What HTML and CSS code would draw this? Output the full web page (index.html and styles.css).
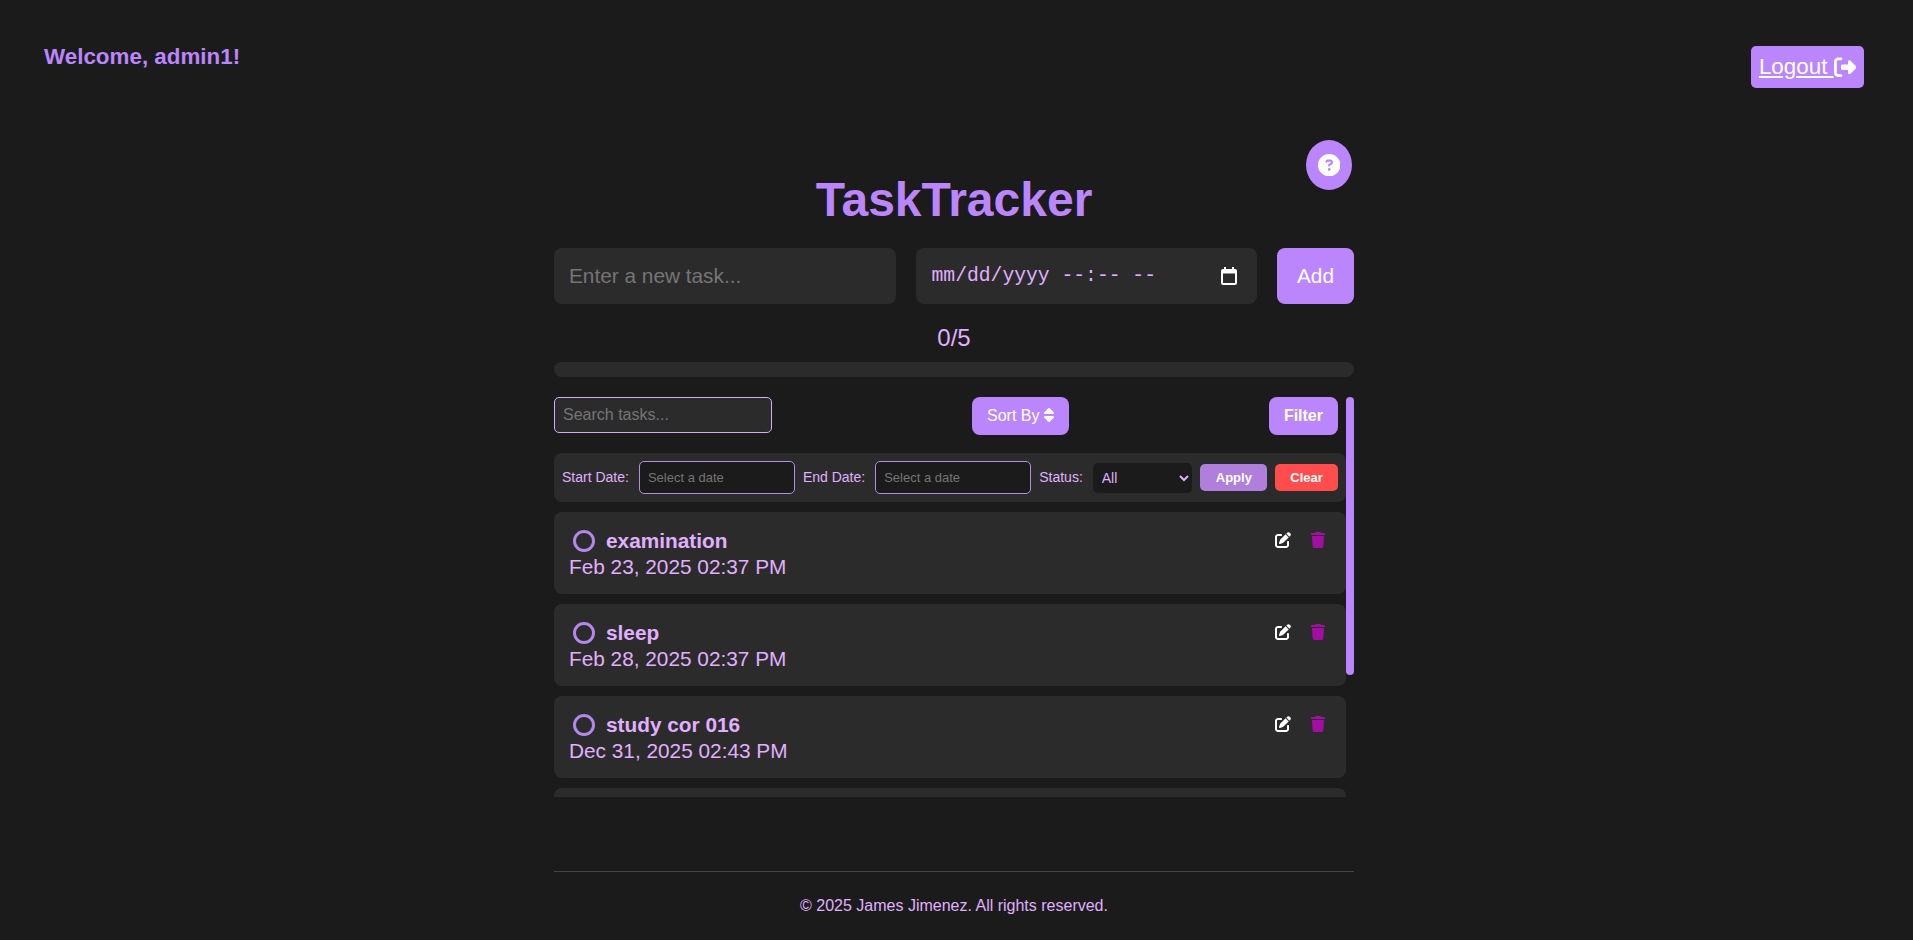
FILE: index.html
```html
<!DOCTYPE html>
<html lang="en">
<head>
<meta charset="utf-8">
<title>TaskTracker</title>
<link rel="stylesheet" href="styles.css">
</head>
<body>
<header class="topbar">
  <h2 class="welcome">Welcome, admin1!</h2>
  <a class="logout" href="#"><span class="logout-text">Logout </span><svg class="logout-icon" viewBox="0 0 512 512"><path d="M377.9 105.9L500.7 228.7c7.2 7.2 11.3 17.1 11.3 27.3s-4.1 20.1-11.3 27.3L377.9 406.1c-6.4 6.4-15 9.9-24 9.9c-18.7 0-33.9-15.2-33.9-33.9l0-62.1-128 0c-17.7 0-32-14.3-32-32l0-64c0-17.7 14.3-32 32-32l128 0 0-62.1c0-18.7 15.2-33.9 33.9-33.9c9 0 17.6 3.5 24 9.9zM160 96L96 96c-17.7 0-32 14.3-32 32l0 256c0 17.7 14.3 32 32 32l64 0c17.7 0 32 14.3 32 32s-14.3 32-32 32l-64 0c-53 0-96-43-96-96L0 128C0 75 43 32 96 32l64 0c17.7 0 32 14.3 32 32s-14.3 32-32 32z"/></svg></a>
</header>
<main class="app">
  <button class="help" type="button" aria-label="Help"><svg class="help-icon" viewBox="0 0 512 512"><path d="M256 512A256 256 0 1 0 256 0a256 256 0 1 0 0 512zM169.8 165.3c7.9-22.3 29.1-37.3 52.8-37.3h58.3c34.9 0 63.1 28.3 63.1 63.1c0 22.6-12.1 43.5-31.7 54.8L280 264.4c-.2 13-10.9 23.6-24 23.6c-13.3 0-24-10.7-24-24V250.5c0-8.6 4.6-16.5 12.1-20.8l44.3-25.4c4.7-2.7 7.6-7.7 7.6-13.1c0-8.4-6.8-15.1-15.1-15.1H222.6c-3.4 0-6.4 2.1-7.5 5.3l-.4 1.2c-4.4 12.5-18.2 19-30.6 14.6s-19-18.2-14.6-30.6l.4-1.2zM224 352a32 32 0 1 1 64 0 32 32 0 1 1 -64 0z"/></svg></button>
  <h1 class="title">TaskTracker</h1>
  <form class="task-form">
    <input class="field task-input" type="text" placeholder="Enter a new task...">
    <div class="field task-date"><span>mm/dd/yyyy --:-- --</span><svg class="calendar" viewBox="0 0 16 18"><path d="M3 0h2v2h6V0h2v2h1a2 2 0 0 1 2 2v12a2 2 0 0 1-2 2H2a2 2 0 0 1-2-2V4a2 2 0 0 1 2-2h1V0zM2 6.5V16h12V6.500H2z"/></svg></div>
    <button class="add" type="button">Add</button>
  </form>
  <div class="counter">0/5</div>
  <div class="progress"></div>
  <div class="list-wrap">
    <div class="scroller">
      <div class="toolbar">
        <input class="search" type="text" placeholder="Search tasks...">
        <button class="tool-btn sort" type="button">Sort By <svg class="sort-icon" viewBox="0 0 320 512"><path d="M137.4 41.4c12.5-12.5 32.8-12.5 45.3 0l128 128c9.2 9.2 11.9 22.9 6.9 34.9s-16.6 19.8-29.6 19.8H32c-12.9 0-24.6-7.8-29.6-19.8s-2.200-25.700 6.900-34.900l128-128zm0 429.3l-128-128c-9.2-9.2-11.9-22.9-6.9-34.9s16.6-19.8 29.6-19.8H288c12.9 0 24.6 7.8 29.6 19.8s2.200 25.700-6.900 34.900l-128 128c-12.5 12.5-32.8 12.5-45.3 0z"/></svg></button>
        <button class="tool-btn filter" type="button">Filter</button>
      </div>
      <div class="filters">
        <label class="filter-label">Start Date:</label>
        <input class="date-filter" type="text" placeholder="Select a date">
        <label class="filter-label">End Date:</label>
        <input class="date-filter" type="text" placeholder="Select a date">
        <label class="filter-label">Status:</label>
        <select class="status"><option>All</option><option>Completed</option><option>Pending</option></select>
        <button class="mini apply" type="button">Apply</button>
        <button class="mini clear" type="button">Clear</button>
      </div>
      <ul class="tasks">
        <li class="task">
          <div class="task-row">
            <span class="check"></span><span class="task-name">examination</span>
            <div class="actions">
              <svg class="edit" viewBox="0 0 512 512"><path d="M471.6 21.7c-21.9-21.9-57.3-21.9-79.2 0L362.3 51.7l97.9 97.9 30.1-30.1c21.9-21.9 21.9-57.3 0-79.2L471.6 21.7zm-299.2 220c-6.1 6.1-10.8 13.6-13.5 21.9l-29.6 88.8c-2.9 8.6-.6 18.1 5.8 24.6s15.9 8.7 24.6 5.8l88.8-29.6c8.2-2.7 15.7-7.4 21.9-13.5L437.7 172.3 339.7 74.3 172.4 241.7zM96 64C43 64 0 107 0 160V416c0 53 43 96 96 96H352c53 0 96-43 96-96V320c0-17.7-14.3-32-32-32s-32 14.3-32 32v96c0 17.7-14.3 32-32 32H96c-17.7 0-32-14.3-32-32V160c0-17.7 14.3-32 32-32h96c17.7 0 32-14.3 32-32s-14.3-32-32-32H96z"/></svg>
              <svg class="trash" viewBox="0 0 448 512"><path d="M135.2 17.7L128 32H32C14.3 32 0 46.3 0 64S14.3 96 32 96H416c17.7 0 32-14.3 32-32s-14.3-32-32-32H320l-7.2-14.3C307.4 6.8 296.3 0 284.2 0H163.8c-12.1 0-23.2 6.8-28.6 17.7zM416 128H32L53.2 467c1.6 25.3 22.6 45 47.9 45H346.9c25.3 0 46.3-19.7 47.9-45L416 128z"/></svg>
            </div>
          </div>
          <div class="task-date-text">Feb 23, 2025 02:37 PM</div>
        </li>
        <li class="task">
          <div class="task-row">
            <span class="check"></span><span class="task-name">sleep</span>
            <div class="actions">
              <svg class="edit" viewBox="0 0 512 512"><path d="M471.6 21.7c-21.9-21.9-57.3-21.9-79.2 0L362.3 51.7l97.9 97.9 30.1-30.1c21.9-21.9 21.9-57.3 0-79.2L471.6 21.7zm-299.2 220c-6.1 6.1-10.8 13.6-13.5 21.9l-29.6 88.8c-2.9 8.6-.6 18.1 5.8 24.6s15.9 8.7 24.6 5.8l88.8-29.6c8.2-2.7 15.7-7.4 21.9-13.5L437.7 172.3 339.7 74.3 172.4 241.7zM96 64C43 64 0 107 0 160V416c0 53 43 96 96 96H352c53 0 96-43 96-96V320c0-17.7-14.3-32-32-32s-32 14.3-32 32v96c0 17.7-14.3 32-32 32H96c-17.7 0-32-14.3-32-32V160c0-17.7 14.3-32 32-32h96c17.7 0 32-14.3 32-32s-14.3-32-32-32H96z"/></svg>
              <svg class="trash" viewBox="0 0 448 512"><path d="M135.2 17.7L128 32H32C14.3 32 0 46.3 0 64S14.3 96 32 96H416c17.7 0 32-14.3 32-32s-14.3-32-32-32H320l-7.2-14.3C307.4 6.8 296.3 0 284.2 0H163.8c-12.1 0-23.2 6.8-28.6 17.7zM416 128H32L53.2 467c1.6 25.3 22.6 45 47.9 45H346.9c25.3 0 46.3-19.7 47.9-45L416 128z"/></svg>
            </div>
          </div>
          <div class="task-date-text">Feb 28, 2025 02:37 PM</div>
        </li>
        <li class="task">
          <div class="task-row">
            <span class="check"></span><span class="task-name">study cor 016</span>
            <div class="actions">
              <svg class="edit" viewBox="0 0 512 512"><path d="M471.6 21.7c-21.9-21.9-57.3-21.9-79.2 0L362.3 51.7l97.9 97.9 30.1-30.1c21.9-21.9 21.9-57.3 0-79.2L471.6 21.7zm-299.2 220c-6.1 6.1-10.8 13.6-13.5 21.9l-29.6 88.8c-2.9 8.6-.6 18.1 5.8 24.6s15.9 8.7 24.6 5.8l88.8-29.6c8.2-2.7 15.7-7.4 21.9-13.5L437.7 172.3 339.7 74.3 172.4 241.7zM96 64C43 64 0 107 0 160V416c0 53 43 96 96 96H352c53 0 96-43 96-96V320c0-17.7-14.3-32-32-32s-32 14.3-32 32v96c0 17.7-14.3 32-32 32H96c-17.7 0-32-14.3-32-32V160c0-17.7 14.3-32 32-32h96c17.7 0 32-14.3 32-32s-14.3-32-32-32H96z"/></svg>
              <svg class="trash" viewBox="0 0 448 512"><path d="M135.2 17.7L128 32H32C14.3 32 0 46.3 0 64S14.3 96 32 96H416c17.7 0 32-14.3 32-32s-14.3-32-32-32H320l-7.2-14.3C307.4 6.8 296.3 0 284.2 0H163.8c-12.1 0-23.2 6.8-28.6 17.7zM416 128H32L53.2 467c1.6 25.3 22.6 45 47.9 45H346.9c25.3 0 46.3-19.7 47.9-45L416 128z"/></svg>
            </div>
          </div>
          <div class="task-date-text">Dec 31, 2025 02:43 PM</div>
        </li>
        <li class="task"></li>
      </ul>
    </div>
    <div class="thumb"></div>
  </div>
  <footer class="footer">© 2025 James Jimenez. All rights reserved.</footer>
</main>
</body>
</html>
```

FILE: styles.css
```css
* { box-sizing: border-box; }
html, body { height: 100%; }
body {
  margin: 0;
  padding-right: 5px;
  overflow: hidden;
  background: #1b1b1b;
  color: #e0b0ff;
  font-family: "Liberation Sans", Arial, sans-serif;
}
.topbar {
  display: flex;
  justify-content: space-between;
  align-items: flex-start;
  padding: 44px 44px 0;
  height: 88px;
}
.welcome {
  margin: 0;
  font-size: 22.4px;
  font-weight: 700;
  color: #bb86fc;
}
.logout {
  display: flex;
  align-items: center;
  margin-top: 2px;
  padding: 8px;
  height: 42px;
  border-radius: 5px;
  background: #bb86fc;
  color: #fff;
  font-size: 22.4px;
  text-decoration: underline;
  white-space: pre;
}
.logout-icon { width: 22.4px; height: 22.4px; fill: #fff; }
.app {
  position: relative;
  width: 800px;
  margin: 52px auto 0;
  padding-top: 32px;
}
.help {
  position: absolute;
  top: 0;
  right: 2px;
  display: flex;
  align-items: center;
  justify-content: center;
  width: 46px;
  height: 50px;
  padding: 0;
  border: 0;
  border-radius: 50%;
  background: #bb86fc;
}
.help-icon { width: 22.4px; height: 22.4px; fill: #fff; }
.title {
  margin: 0 0 21px;
  height: 55px;
  text-align: center;
  font-size: 48px;
  line-height: 55px;
  font-weight: 700;
  color: #bb86fc;
}
.task-form { display: flex; gap: 20px; height: 56px; }
.field {
  flex: 0 0 341.5px;
  padding: 15px;
  border: 0;
  border-radius: 8px;
  background: #2b2b2b;
  color: #e0b0ff;
  font-size: 20.8px;
  font-family: inherit;
}
.field::placeholder { color: #757575; }
.task-date {
  display: flex;
  align-items: center;
  justify-content: space-between;
  padding: 0 20px 0 16px;
  font-family: "Liberation Mono", monospace;
  font-size: 19.7px;
  white-space: pre;
}
.calendar { width: 16px; height: 18px; fill: #fff; }
.add {
  flex: 0 0 77px;
  padding: 0;
  border: 0;
  border-radius: 8px;
  background: #bb86fc;
  color: #fff;
  font-size: 20.8px;
  font-family: inherit;
}
.counter {
  margin-top: 20px;
  height: 28px;
  line-height: 28px;
  text-align: center;
  font-size: 24px;
}
.progress {
  margin-top: 10px;
  height: 15px;
  border-radius: 8px;
  background: #2b2b2b;
}
.list-wrap {
  position: relative;
  margin-top: 20px;
  height: 400px;
}
.scroller {
  height: 100%;
  padding-right: 8px;
  overflow: hidden;
}
.thumb {
  position: absolute;
  top: 0;
  right: 0;
  width: 8px;
  height: 278px;
  border-radius: 4px;
  background: #bb86fc;
}
.toolbar {
  display: flex;
  justify-content: space-between;
  align-items: flex-start;
  height: 38px;
  margin-bottom: 18px;
  padding-right: 8px;
}
.search {
  width: 218px;
  height: 36px;
  padding: 8px;
  border: 1px solid #d0b0f0;
  border-radius: 5px;
  background: #2b2b2b;
  color: #e0b0ff;
  font-size: 16px;
  font-family: inherit;
}
.search::placeholder { color: #757575; }
.tool-btn {
  height: 38px;
  padding: 0 15px;
  border: 0;
  border-radius: 8px;
  background: #bb86fc;
  color: #fff;
  font-size: 16px;
  font-family: inherit;
}
.filter { font-weight: 700; }
.sort-icon { width: 10px; height: 16px; fill: #fff; vertical-align: -2px; }
.filters {
  display: flex;
  align-items: center;
  gap: 8px;
  height: 49px;
  margin-bottom: 10px;
  padding: 0 8px;
  border-radius: 8px;
  background: #2b2b2b;
}
.filter-label { margin: 0 2px 2px 0; font-size: 14px; white-space: nowrap; }
.date-filter {
  width: 156px;
  height: 33px;
  padding: 8px;
  border: 1px solid #b28fdc;
  border-radius: 5px;
  background: #1b1b1b;
  color: #e0b0ff;
  font-size: 13px;
  font-family: inherit;
}
.date-filter::placeholder { color: #757575; }
.status {
  width: 100px;
  height: 30px;
  padding: 0 5px;
  border: 0;
  border-radius: 5px;
  background: #1b1b1b;
  color: #e0b0ff;
  font-size: 14px;
  font-family: inherit;
  color-scheme: dark;
}
.mini {
  height: 27px;
  padding: 0;
  border: 0;
  border-radius: 5px;
  color: #fff;
  font-size: 13px;
  font-weight: 700;
  font-family: inherit;
}
.apply { width: 67px; background: #b07fdc; }
.clear { width: 63px; background: #ff4d4d; }
.tasks { margin: 0; padding: 0; list-style: none; }
.task {
  height: 82px;
  margin-bottom: 10px;
  padding: 15px;
  border-radius: 8px;
  background: #2b2b2b;
}
.task-row { display: flex; align-items: center; height: 28px; }
.check {
  width: 22px;
  height: 22px;
  margin: 0 11px 0 4px;
  border: 3px solid #b388eb;
  border-radius: 50%;
}
.task-name { font-size: 20.8px; font-weight: 700; }
.actions { display: flex; align-items: center; gap: 20px; margin: -2px 6px 0 auto; }
.edit { width: 16px; height: 16px; fill: #fff; }
.trash { width: 14px; height: 16px; fill: #a30fa3; }
.task-date-text { font-size: 20.8px; line-height: 24px; }
.footer {
  margin-top: 74px;
  padding-top: 24px;
  border-top: 1px solid #444;
  text-align: center;
  font-size: 16px;
  line-height: 20px;
}
```
